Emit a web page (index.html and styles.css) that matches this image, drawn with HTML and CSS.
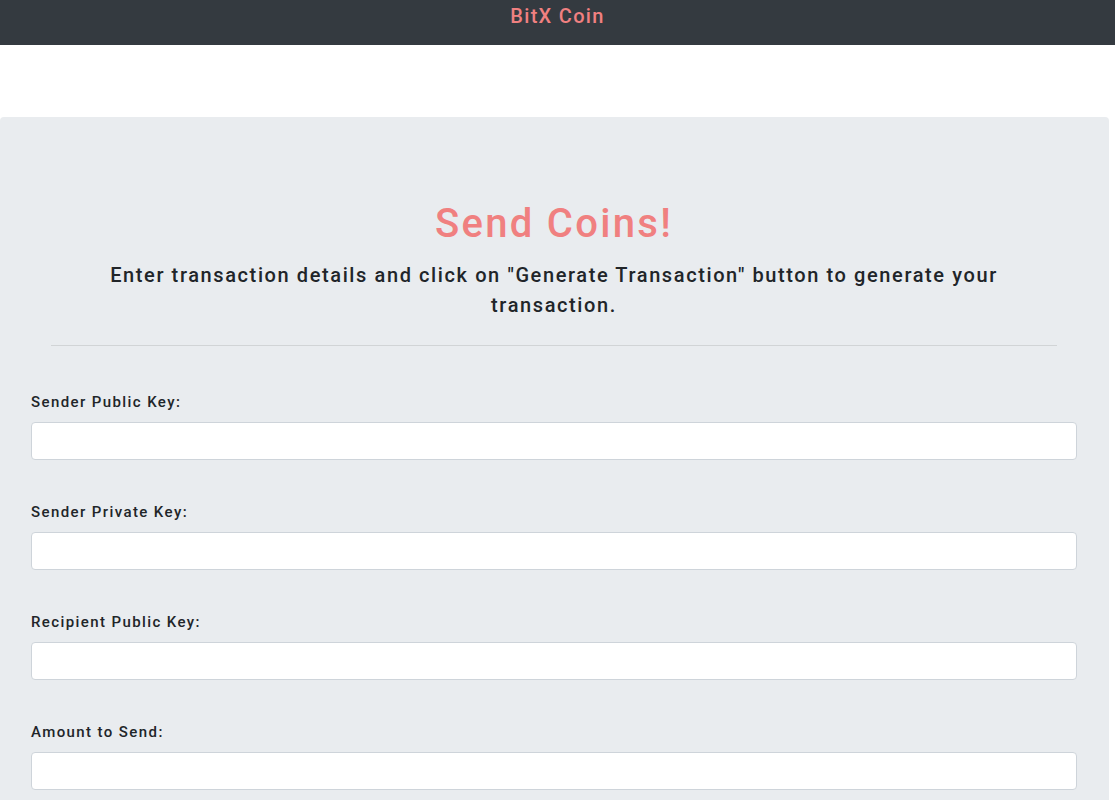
FILE: index.html
```html
<!DOCTYPE html>
<html lang="en">
<head>
<meta charset="utf-8">
<title>BitX Coin</title>
<link rel="stylesheet" href="styles.css">
</head>
<body>
<nav class="navbar">
  <span class="brand">BitX Coin</span>
</nav>
<main class="page">
  <section class="jumbotron">
    <div class="intro">
      <h1 class="title">Send Coins!</h1>
      <p class="lead">Enter transaction details and click on "Generate Transaction" button to generate your transaction.</p>
      <hr class="divider">
    </div>
    <form class="tx-form">
      <div class="form-group">
        <label class="label" for="sender_public_key">Sender Public Key:</label>
        <input class="form-control" type="text" id="sender_public_key">
      </div>
      <div class="form-group">
        <label class="label" for="sender_private_key">Sender Private Key:</label>
        <input class="form-control" type="text" id="sender_private_key">
      </div>
      <div class="form-group">
        <label class="label" for="recipient_public_key">Recipient Public Key:</label>
        <input class="form-control" type="text" id="recipient_public_key">
      </div>
      <div class="form-group">
        <label class="label" for="amount">Amount to Send:</label>
        <input class="form-control" type="text" id="amount">
      </div>
    </form>
  </section>
</main>
</body>
</html>
```

FILE: styles.css
```css
* { box-sizing: border-box; }
html, body { margin: 0; padding: 0; }
body {
  font-family: Roboto, "Liberation Sans", sans-serif;
  color: #212529;
  background: #fff;
}
.navbar {
  height: 45px;
  background: #343a40;
  display: flex;
  justify-content: center;
  align-items: flex-start;
  padding-top: 1px;
}
.brand {
  color: #f08080;
  font-size: 20px;
  line-height: 30px;
  font-weight: 500;
  letter-spacing: 1.3px;
}
.page {
  padding-top: 72px;
  padding-right: 6px;
}
.jumbotron {
  background: #e9ecef;
  border-radius: 4px;
  padding: 83px 32px 40px 31px;
}
.intro {
  padding: 0 20px;
  text-align: center;
}
.title {
  margin: 0 0 12px;
  font-size: 40px;
  line-height: 48px;
  font-weight: 500;
  color: #f08080;
  letter-spacing: 2.3px;
}
.lead {
  margin: 0 0 25px;
  padding: 0 40px;
  font-size: 20px;
  line-height: 30px;
  font-weight: 500;
  letter-spacing: 1.6px;
}
.divider {
  margin: 0;
  border: 0;
  border-top: 1px solid rgba(0,0,0,0.1);
}
.tx-form {
  padding-top: 44px;
}
.form-group {
  display: flex;
  flex-direction: column;
  margin-bottom: 40px;
}
.label {
  font-size: 15px;
  line-height: 24px;
  font-weight: 500;
  margin-bottom: 8px;
  letter-spacing: 1.4px;
}
.form-control {
  height: 38px;
  border: 1px solid #ced4da;
  border-radius: 4px;
  background: #fff;
  padding: 6px 12px;
  font-size: 16px;
}
```
